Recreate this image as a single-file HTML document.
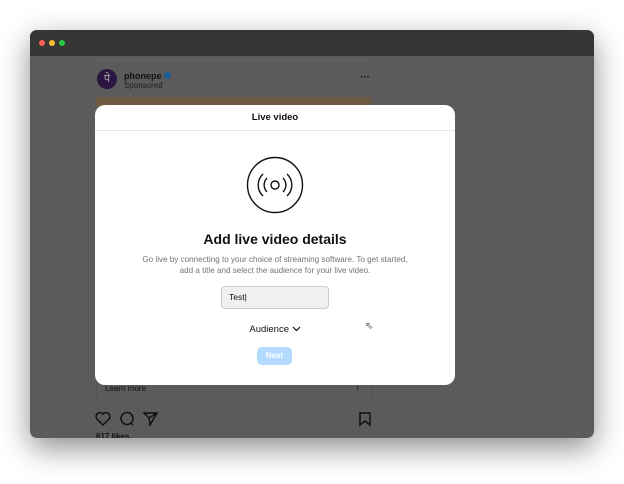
<!DOCTYPE html><html><head><style>
*{margin:0;padding:0;box-sizing:border-box}
body{width:624px;height:484px;background:#fff;position:relative;overflow:hidden;font-family:"Liberation Sans",sans-serif}
.win{position:absolute;left:30px;top:30px;width:564px;height:408px;border-radius:7px;background:#5b5b5b;overflow:hidden;box-shadow:0 10px 30px rgba(0,0,0,.45)}
.bar{height:26px;background:#363636}
.dot{position:absolute;top:10px;width:6px;height:6px;border-radius:50%}
.a{position:absolute}
.modal{position:absolute;left:95px;top:105px;width:360px;height:280px;background:#fff;border-radius:10px}
</style></head><body>
<div class="win">
<div class="bar"></div>
<div class="dot" style="left:9px;background:#fe5f57"></div>
<div class="dot" style="left:19px;background:#febc2e"></div>
<div class="dot" style="left:29px;background:#28c840"></div>
<div class="a" style="left:66px;top:30px;width:276px;height:1px;background:#666"></div>
</div>
<div class="a" style="left:97px;top:69px;width:20px;height:20px;border-radius:50%;background:#2a1640;color:#aaa;font-size:11px;text-align:center;line-height:20px">पे</div>
<div class="a" style="left:124px;top:71px;font-size:9px;font-weight:bold;color:#111">phonepe <span style="display:inline-block;width:7px;height:7px;border-radius:50%;background:#1d5e9a"></span></div>
<div class="a" style="left:124px;top:81px;font-size:8px;color:#222">Sponsored</div>
<div class="a" style="left:360px;top:72px;font-size:10px;color:#111;font-weight:bold">···</div>
<div class="a" style="left:96px;top:97px;width:276px;height:10px;background:#6b5a40;border-radius:3px 3px 0 0"></div>
<div class="a" style="left:96px;top:372px;width:276px;height:32px;border:1px solid #555;border-radius:3px"></div>
<div class="a" style="left:105px;top:384px;font-size:8px;color:#111">Learn more</div>
<div class="a" style="left:356px;top:382px;font-size:9px;color:#111">›</div>
<svg class="a" style="left:95px;top:410px" width="280" height="18" viewBox="0 0 280 18" fill="none" stroke="#111" stroke-width="1.5">
<path d="M8 15 L2 9 A3.5 3.5 0 0 1 8 4 A3.5 3.5 0 0 1 14 9 Z"/>
<circle cx="32" cy="8.5" r="6"/><path d="M36 13 L38 15"/>
<path d="M49 3 L62 3 L55 15 L54 8 Z M54 8 L62 3"/>
<path d="M265 3 H275 V15 L270 11 L265 15 Z"/></svg>
<div class="a" style="left:96px;top:432px;font-size:8px;color:#111;font-weight:bold;height:6px;overflow:hidden">617 likes</div>
<div class="modal">
<div style="height:26px;border-bottom:1px solid #e6e6e6;text-align:center;font-size:9.5px;font-weight:bold;line-height:26px;color:#111">Live video</div>
<svg class="a" style="left:151px;top:51px" width="58" height="58" viewBox="0 0 58 58" fill="none" stroke="#111" stroke-width="1.4">
<circle cx="29" cy="29" r="27.5"/><circle cx="29" cy="29" r="4"/>
<path d="M21 22 A10 10 0 0 0 21 36 M37 22 A10 10 0 0 1 37 36 M17 18 A15 15 0 0 0 17 40 M41 18 A15 15 0 0 1 41 40"/></svg>
<div class="a" style="left:0;width:360px;top:126px;text-align:center;font-size:14px;font-weight:bold;color:#111">Add live video details</div>
<div class="a" style="left:0;width:360px;top:149px;text-align:center;font-size:8.1px;line-height:11px;color:#737373">Go live by connecting to your choice of streaming software. To get started,<br>add a title and select the audience for your live video.</div>
<div class="a" style="left:126px;top:181px;width:108px;height:23px;background:#f0f0f0;border:1px solid #ccc;border-radius:4px;font-size:8.5px;line-height:21px;padding-left:7px;color:#111">Test|</div>
<div class="a" style="left:0;width:360px;top:219px;text-align:center;font-size:9.5px;color:#111">Audience <svg width="9" height="6" viewBox="0 0 9 6" fill="none" stroke="#111" stroke-width="1.2"><path d="M1 1 L4.5 4.5 L8 1"/></svg></div>
<div class="a" style="left:162px;top:242px;width:35px;height:18px;border-radius:5px;background:#b3dbff;color:#fff;font-size:8px;font-weight:bold;text-align:center;line-height:18px">Next</div>
<div class="a" style="left:270px;top:216px;font-size:10px;color:#555">⇖</div>
</div>
</body></html>
